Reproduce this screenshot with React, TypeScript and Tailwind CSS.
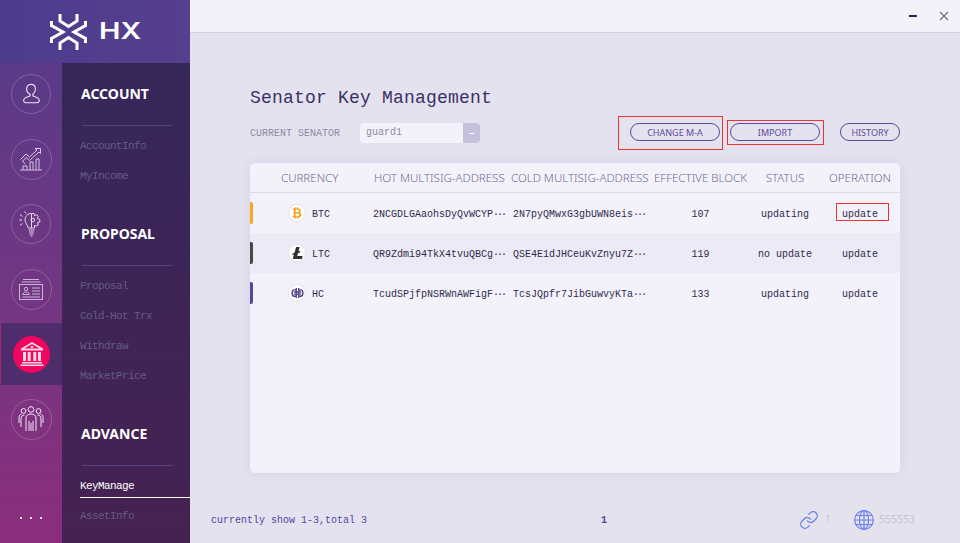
import { Link } from "lucide-react";
import type { ReactNode } from "react";

const MONO = "font-['Liberation_Mono',monospace]";

function HxMark() {
  return (
    <svg width="37" height="36" viewBox="0 0 37 36" fill="none" stroke="#fff" strokeWidth="3">
      <path d="M10 0V7L18.500 12.500L27 7V0" />
      <path d="M10 36V29L18.500 23.500L27 29V36" />
      <path d="M1.500 7V11.500L13 18L1.500 24.500V29" />
      <path d="M35.500 7V11.500L24 18L35.500 24.500V29" />
    </svg>
  );
}

function UserIcon() {
  return (
    <svg width="22" height="22" viewBox="0 0 24 24" fill="none" stroke="#efe6f5" strokeWidth="1.200">
      <path d="M12 1.500c3 0 4.800 2.200 4.800 5 0 2.600-1.300 4.600-2.800 5.800v1.600c0 .7 5.800 1.500 6.800 4 .8 2.100-.4 3.600-2.300 3.600H6.500c-1.900 0-3.100-1.500-2.300-3.600 1-2.500 6.800-3.300 6.800-4v-1.600C8.500 11.100 7.200 9.100 7.200 6.500c0-2.800 1.800-5 4.800-5z" />
    </svg>
  );
}

function ChartIcon() {
  return (
    <svg width="24" height="24" viewBox="0 0 24 24" fill="none" stroke="#e6d9ee" strokeWidth="0.900">
      <path d="M1 23H23M4 22.500V19H8V22.500M11 22.500V15H14V22.500M17 22.500V12H20V22.500" />
      <path d="M1.500 12.500L7 7L10.500 10L18 3L16 1.500H21.500V6.500L20 5L10.500 13.500L7 10.500L3.500 14.500L6.500 17" />
    </svg>
  );
}

function BulbIcon() {
  return (
    <svg width="26" height="26" viewBox="0 0 26 26" fill="none" stroke="#efe6f5" strokeWidth="0.900">
      <path d="M13.500 2.500C9.500 2.500 7 5.500 7 9C7 12.500 9.800 13.500 10.200 17H16.500" />
      <path d="M13.500 2.500H16L16.500 4.500L18.800 3.800L20.300 5.600L19.200 7.400L21.800 8.500V11L19.500 11.500L20.200 14L18 15L16.500 14.500V17" />
      <path d="M13.500 2.500V17" />
      <circle cx="14.800" cy="9" r="1.800" />
      <path d="M10.500 19H16.500M11 21H16M11.500 23H15.500M12.500 25H14.500" />
      <path d="M1 9H4M2 3.500L4.500 5.500M2 14.500L4.500 12.500M6.500 0.500L8 2.500" />
    </svg>
  );
}

function CardIcon() {
  return (
    <svg width="24" height="24" viewBox="0 0 24 24" fill="none" stroke="#cbb6d8" strokeWidth="1">
      <path d="M4 2.500H20M2.500 5H21.500" />
      <rect x="0.500" y="7.500" width="23" height="15" />
      <circle cx="7" cy="12" r="1.700" />
      <path d="M3.500 17.500C4 15.500 5.500 15 7 15S10 15.500 10.500 17.500ZM13 11H21M13 14H21M13 17H21M3.500 20H21" />
    </svg>
  );
}

function BankIcon() {
  return (
    <svg width="24" height="24" viewBox="0 0 24 24" fill="#ffd4e3" stroke="none">
      <path d="M12 0L23 6.500V8.500H1V6.500ZM12 2L4.500 6.500H19.500Z" fillRule="evenodd" />
      <circle cx="12" cy="5" r="1.300" />
      <path d="M3 10H6V19H3ZM7.700 10H10.700V19H7.700ZM13.300 10H16.300V19H13.300ZM18 10H21V19H18ZM2 20H22V21.500H2ZM0.500 22.500H23.500V24H0.500Z" />
    </svg>
  );
}

function TeamIcon() {
  return (
    <svg width="26" height="26" viewBox="0 0 26 26" fill="none" stroke="#f2e8f5" strokeWidth="1">
      <circle cx="13" cy="3.500" r="2.800" />
      <circle cx="5.500" cy="5" r="2.400" />
      <circle cx="20.500" cy="5" r="2.400" />
      <path d="M8 25V12C8 9.500 10 8 13 8S18 9.500 18 12V25" />
      <path d="M3 21V13C3 10.500 4 9 6.500 9M23 21V13C23 10.500 22 9 19.500 9M1 17V11.500C1 9.500 2 8.500 3.500 8M25 17V11.500C25 9.500 24 8.500 22.500 8" />
      <path d="M11 15V25M15 15V25M13 17V25" />
    </svg>
  );
}

function BtcGlyph() {
  return (
    <svg width="10" height="12" viewBox="0 0 12 14" fill="#f7a122">
      <path d="M3 0H4.500V1.500H6V0H7.500V1.600C9.600 2 10.500 3.100 10.500 4.300C10.500 5.400 10 6.100 9 6.500C10.500 6.900 11.300 7.900 11.300 9.300C11.300 11.100 10 12.200 7.500 12.400V14H6V12.500H4.500V14H3V12.500H0.800V10.800H2V3.200H0.800V1.500H3ZM4.300 3.200V5.900H6.300C7.500 5.900 8.100 5.400 8.100 4.500S7.500 3.200 6.300 3.200ZM4.300 7.500V10.800H6.600C8 10.800 8.800 10.200 8.800 9.100S8 7.500 6.600 7.500Z" fillRule="evenodd" />
    </svg>
  );
}

function LtcGlyph() {
  return (
    <svg width="11" height="12" viewBox="0 0 13 14" fill="#2f2f2f">
      <path d="M5 0H9L7.600 5.200L10 4.300L9.400 6.400L7 7.300L6.200 10.500H12.500L11.800 14H1L2.300 8.900L0.300 9.700L0.900 7.600L2.900 6.800Z" />
    </svg>
  );
}

function HcGlyph() {
  return (
    <svg width="13" height="10" viewBox="0 0 15 12" fill="none" stroke="#56468f" strokeWidth="1.700">
      <path d="M6 2.200H3.500C2 2.200 1 3.500 1 6S2 9.800 3.500 9.800H6" />
      <path d="M9 2.200H11.500C13 2.200 14 3.500 14 6S13 9.800 11.500 9.800H9" />
      <path d="M6 0V12M9 0V12M3 4.700H12M3 7.300H12" />
    </svg>
  );
}

function GlobeIcon() {
  return (
    <svg width="20" height="20" viewBox="0 0 20 20" fill="none" stroke="#6d80e6" strokeWidth="1.200">
      <circle cx="10" cy="10" r="9.300" />
      <ellipse cx="10" cy="10" rx="4.500" ry="9.300" />
      <path d="M10 0.700V19.300M0.700 10H19.300M2 5.500H18M2 14.500H18" />
    </svg>
  );
}

const railItems = [
  { icon: <UserIcon />, size: "size-10" },
  { icon: <ChartIcon />, size: "size-[41px]" },
  { icon: <BulbIcon />, size: "size-10" },
  { icon: <CardIcon />, size: "size-[41px]" },
  { icon: <BankIcon />, active: true, size: "size-[37px]" },
  { icon: <TeamIcon />, size: "size-[41px]" },
];

const sections = [
  { title: "ACCOUNT", items: ["AccountInfo", "MyIncome"] },
  { title: "PROPOSAL", items: ["Proposal", "Cold-Hot Trx", "Withdraw", "MarketPrice"] },
  { title: "ADVANCE", items: ["KeyManage", "AssetInfo"], current: "KeyManage" },
];

const rows = [
  {
    chip: "bg-[#f9a825]",
    glyph: <BtcGlyph />,
    name: "BTC",
    hot: "2NCGDLGAaohsDyQvWCYP",
    cold: "2N7pyQMwxG3gbUWN8eis",
    block: 107,
    status: "updating",
    flagged: true,
    bg: "bg-[#f3f2fb]",
  },
  {
    chip: "bg-[#474747]",
    glyph: <LtcGlyph />,
    name: "LTC",
    hot: "QR9Zdmi94TkX4tvuQBCg",
    cold: "QSE4E1dJHCeuKvZnyu7Z",
    block: 119,
    status: "no update",
    bg: "bg-[#ebeaf5]",
  },
  {
    chip: "bg-[#58479a]",
    glyph: <HcGlyph />,
    name: "HC",
    hot: "TcudSPjfpNSRWnAWFigF",
    cold: "TcsJQpfr7JibGuwvyKTa",
    block: 133,
    status: "updating",
    bg: "bg-[#f3f2fb]",
  },
];

const GRID = "grid grid-cols-[31px_92px_138px_143px_93px_76px_74px]";

function OutlineButton({ label, width }: { label: string; width: string }) {
  return (
    <button
      className={`${width} h-[18px] rounded-full border-[1.5px] border-[#5d4a9c] font-['Noto_Sans',sans-serif] text-[9px] leading-none text-[#5d4a9c]`}
    >
      {label}
    </button>
  );
}

function RedBox({ className, children }: { className: string; children?: ReactNode }) {
  return <div className={`absolute border border-[#f1312e] ${className}`}>{children}</div>;
}

function Address({ value }: { value: string }) {
  return (
    <span className="whitespace-nowrap pt-[2px]">
      {value}
      <span className="tracking-[-2px]">···</span>
    </span>
  );
}

export default function App() {
  return (
    <div className="flex h-[543px] w-[960px] overflow-hidden bg-[#e3e2ee]">
      <aside className="flex w-[190px] flex-col">
        <div className="flex h-[63px] items-center bg-gradient-to-r from-[#4c3c8c] to-[#573e8f] pl-[50px]">
          <HxMark />
          <span className="ml-3 origin-left scale-x-125 font-['Inter',sans-serif] text-[23px] font-semibold leading-none text-white">
            HX
          </span>
        </div>
        <div className="flex flex-1">
          <nav className="flex w-[62px] flex-col gap-[3px] bg-gradient-to-b from-[#5a3a88] to-[#8b2d7c]">
            {railItems.map((item, i) => (
              <div
                key={i}
                className={`flex h-[62px] items-center justify-center ${
                  item.active ? "border-l border-[#a02a6c] bg-[#4f2c6b]" : ""
                }`}
              >
                <div
                  className={`flex ${item.size} items-center justify-center rounded-full ${
                    item.active ? "bg-[#f0055f]" : "border border-white/20"
                  }`}
                >
                  {item.icon}
                </div>
              </div>
            ))}
            <div className="mt-[64px] flex justify-center gap-[8px]">
              <span className="size-[2px] bg-white/90" />
              <span className="size-[2px] bg-white/90" />
              <span className="size-[2px] bg-white/90" />
            </div>
          </nav>
          <div className="flex-1 overflow-hidden bg-gradient-to-b from-[#36275a] to-[#452252]">
            {sections.map((section) => (
              <section key={section.title} className="mb-[12px]">
                <h2 className="flex h-[62px] items-center pl-[19px] font-['Noto_Sans',sans-serif] text-sm font-bold text-white">
                  {section.title}
                </h2>
                <div className="ml-5 h-px w-[91px] bg-[#54427f]" />
                <ul className="pt-[5px]">
                  {section.items.map((name) => (
                    <li
                      key={name}
                      className={`flex h-[30px] items-center pl-[18px] ${MONO} text-[11px] tracking-[-0.6px] ${
                        name === section.current ? "relative text-white" : "text-[#675a86]"
                      }`}
                    >
                      {name}
                      {name === section.current && (
                        <span className="absolute bottom-[3px] left-[18px] right-0 h-px bg-white" />
                      )}
                    </li>
                  ))}
                </ul>
              </section>
            ))}
          </div>
        </div>
      </aside>

      <main className="flex flex-1 flex-col">
        <header className="flex h-[33px] items-center justify-end gap-[22px] border-b border-[#d4d1e2] bg-[#f3f2fb] pr-[11px]">
          <span className="h-[2px] w-2 bg-[#2e2157]" />
          <svg width="10" height="10" viewBox="0 0 10 10" stroke="#6e6889" strokeWidth="1.100">
            <path d="M1 1L9 9M9 1L1 9" />
          </svg>
        </header>

        <div className="flex flex-1 flex-col px-[60px] pt-[53px]">
          <h1 className={`${MONO} text-lg leading-6 tracking-[0.2px] text-[#3d3068]`}>
            Senator Key Management
          </h1>
          <div className="mt-[13px] flex h-5 items-center">
            <span className={`${MONO} w-[110px] text-[10px] text-[#8e89a6]`}>CURRENT SENATOR</span>
            <div className="flex h-5 w-[120px] overflow-hidden rounded-[4px] bg-[#f3f2fb]">
              <span className={`${MONO} flex-1 pl-[6px] text-[10px] leading-5 text-[#8d8a9f]`}>guard1</span>
              <span className="flex w-[17px] items-center justify-center bg-[#c5c0dc]">
                <span className="h-px w-[5px] bg-white" />
              </span>
            </div>
            <div className="mb-[2px] ml-auto flex gap-[10px]">
              <div className="relative flex">
                <OutlineButton label="CHANGE M-A" width="w-[90px]" />
                <RedBox className="-left-3 -top-[7px] h-[34px] w-[105px]" />
              </div>
              <div className="relative flex">
                <OutlineButton label="IMPORT" width="w-[90px]" />
                <RedBox className="-left-[3px] -top-[3px] h-[25px] w-[97px]" />
              </div>
              <div className="ml-[10px] flex">
                <OutlineButton label="HISTORY" width="w-[60px]" />
              </div>
            </div>
          </div>

          <div className="mt-[20px] h-[310px] overflow-hidden rounded-[5px] bg-[#f3f2fb] shadow-[0_0_12px_rgba(120,110,170,0.12)]">
            <div
              className={`${GRID} h-[30px] items-center border-b border-[#dcdbe8] font-['Noto_Sans',sans-serif] text-[11.500px] font-light text-[#6f6a90]`}
            >
              <span />
              <span>CURRENCY</span>
              <span className="whitespace-nowrap pl-px">HOT MULTISIG-ADDRESS</span>
              <span className="whitespace-nowrap">COLD MULTISIG-ADDRESS</span>
              <span className="whitespace-nowrap text-center">EFFECTIVE BLOCK</span>
              <span className="text-center">STATUS</span>
              <span className="text-center">OPERATION</span>
            </div>
            {rows.map((row) => (
              <div
                key={row.name}
                className={`${GRID} h-10 items-center ${row.bg} ${MONO} text-[10px] text-[#2f2a4c]`}
              >
                <span className={`h-[22px] w-[3px] rounded-r-[2px] ${row.chip}`} />
                <div className="flex items-center gap-[6px] pl-[7px]">
                  <span className="flex size-[18px] items-center justify-center rounded-full border border-[#e2e1ea] bg-white">
                    {row.glyph}
                  </span>
                  <span className="pt-[2px]">{row.name}</span>
                </div>
                <Address value={row.hot} />
                <div className="pl-[2px] pt-[2px]">
                  <Address value={row.cold} />
                </div>
                <span className="pt-[2px] text-center">{row.block}</span>
                <span className="pt-[2px] text-center">{row.status}</span>
                <div className="flex justify-center pt-[2px]">
                  <span className="relative">
                    update
                    {row.flagged && <RedBox className="-left-[6px] -top-[4px] h-[18px] w-[53px]" />}
                  </span>
                </div>
              </div>
            ))}
          </div>

          <footer className="-mx-[40px] mt-[36px] flex h-[22px] items-center">
            <span className={`${MONO} w-[391px] pl-px text-[10px] text-[#5a42a3]`}>currently show 1-3,total 3</span>
            <span className={`${MONO} text-[10px] font-bold text-[#5a42a3]`}>1</span>
            <div className="ml-auto mr-[25px] flex items-center font-['Noto_Sans',sans-serif] text-[10.500px] text-[#c5c4d6]">
              <Link className="size-5 text-[#6d80e6]" strokeWidth={1.500} />
              <span className="ml-[6px] w-[29px]">1</span>
              <GlobeIcon />
              <span className="ml-[5px]">555553</span>
            </div>
          </footer>
        </div>
      </main>
    </div>
  );
}
